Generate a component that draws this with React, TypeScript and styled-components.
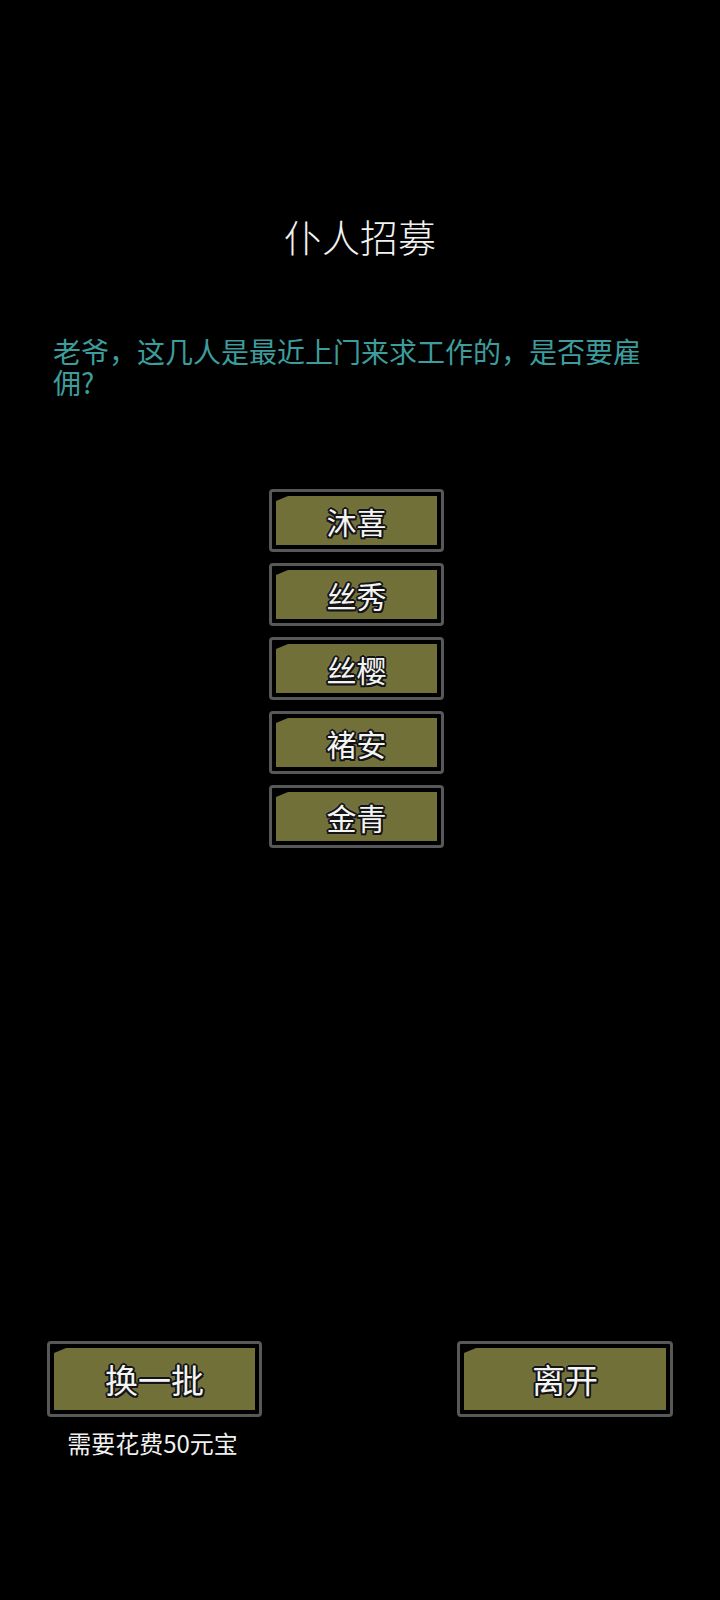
import { createGlobalStyle } from "styled-components";
import styled from "styled-components";

const candidates = ["沐喜", "丝秀", "丝樱", "褚安", "金青"];

const GlobalStyle = createGlobalStyle`
  html, body {
    margin: 0;
    padding: 0;
    background: #000;
  }
  #root {
    min-height: 1600px;
  }
`;

export default function App() {
  return (
    <>
      <GlobalStyle />
      <Page>
        <Title>仆人招募</Title>
        <Prompt>老爷，这几人是最近上门来求工作的，是否要雇佣?</Prompt>
        <CandidateList>
          {candidates.map((name) => (
            <Frame key={name} $width={175} $height={63}>
              <Fill $size={30}>{name}</Fill>
            </Frame>
          ))}
        </CandidateList>
        <BottomRow>
          <ActionColumn>
            <Frame $width={215} $height={76}>
              <Fill $size={33}>换一批</Fill>
            </Frame>
            <Cost>需要花费50元宝</Cost>
          </ActionColumn>
          <ActionColumn>
            <Frame $width={216} $height={76}>
              <Fill $size={33}>离开</Fill>
            </Frame>
          </ActionColumn>
        </BottomRow>
      </Page>
    </>
  );
}

const Page = styled.div`
  width: 720px;
  min-height: 1600px;
  background: #000;
  display: flex;
  flex-direction: column;
  font-family: "Noto Sans CJK SC", "Noto Sans", sans-serif;
`;

const Title = styled.h1`
  margin: 209px 0 0;
  text-align: center;
  color: #f2f2f2;
  font-size: 38px;
  font-weight: 300;
  line-height: 53px;
`;

const Prompt = styled.p`
  margin: 74px 0 0;
  padding: 0 53px;
  color: #3d9c9c;
  font-size: 28px;
  font-weight: 400;
  line-height: 31px;
`;

const CandidateList = styled.div`
  margin-top: 91px;
  display: flex;
  flex-direction: column;
  align-items: center;
  gap: 11px;
  padding-right: 7px;
`;

const Frame = styled.div<{ $width: number; $height: number }>`
  width: ${(p) => p.$width}px;
  height: ${(p) => p.$height}px;
  box-sizing: border-box;
  border: 3px solid #585858;
  border-radius: 4px;
  padding: 4px;
  background: #000;
  display: flex;
`;

const Fill = styled.div<{ $size: number }>`
  flex: 1;
  display: flex;
  align-items: center;
  justify-content: center;
  background: #727039;
  clip-path: polygon(0 5px, 12px 0, 100% 0, 100% 100%, 0 100%);
  color: #f4f4f4;
  font-size: ${(p) => p.$size}px;
  font-weight: 400;
  text-shadow:
    -2px 0 0 #141414, 2px 0 0 #141414, 0 -2px 0 #141414, 0 2px 0 #141414,
    -1.5px -1.5px 0 #141414, 1.5px 1.5px 0 #141414, -1.5px 1.5px 0 #141414,
    1.5px -1.5px 0 #141414,
    0 0 4px #8a8a8a, 0 0 2px #8a8a8a;
`;

const BottomRow = styled.div`
  margin-top: 493px;
  padding: 0 47px;
  display: flex;
  justify-content: space-between;
  align-items: flex-start;
`;

const ActionColumn = styled.div`
  display: flex;
  flex-direction: column;
  align-items: center;
`;

const Cost = styled.div`
  margin-top: 10px;
  color: #f0f0f0;
  font-size: 24px;
  line-height: 32px;
  padding-right: 4px;
`;
